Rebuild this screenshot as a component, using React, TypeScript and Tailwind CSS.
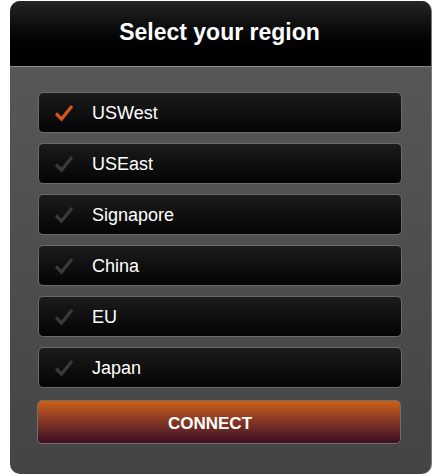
import React, { useState } from 'react';

const regions = ['USWest', 'USEast', 'Signapore', 'China', 'EU', 'Japan'];

const Check: React.FC<{ active: boolean }> = ({ active }) => (
  <svg width="22" height="20" viewBox="0 0 22 20" fill="none">
    <path
      d="M3 10.5 L8.5 16 L19 3"
      stroke={active ? '#d4581c' : '#3a3a3a'}
      strokeWidth="3.2"
      strokeLinecap="butt"
      strokeLinejoin="miter"
    />
  </svg>
);

const App: React.FC = () => {
  const [selected, setSelected] = useState('USWest');

  return (
    <div className="w-[433px] h-[476px] bg-white pt-[1px] pl-[10px] font-['Liberation_Sans',Arial,sans-serif]">
      <div className="w-[422px] h-[473px] rounded-[10px] overflow-hidden border-r border-[#7a7a7a] flex flex-col bg-gradient-to-b from-[#5a5a5a] to-[#444444]">
        {/* Header */}
        <div className="h-[66px] shrink-0 bg-gradient-to-b from-[#252525] to-[#000000] border-b border-[#8a8a8a] flex items-center justify-center">
          <h1 className="text-white text-[23px] font-bold -mt-[3px] -ml-[2px]">Select your region</h1>
        </div>

        {/* Region list */}
        <div className="flex flex-col pl-[28px] pr-[29px] pt-[25px]">
          <div className="flex flex-col gap-[10px]">
            {regions.map((r) => (
              <button
                key={r}
                onClick={() => setSelected(r)}
                className="h-[41px] w-full flex items-center rounded-[5px] border border-[#6a6a6a] bg-gradient-to-b from-[#1c1c1c] to-[#050505] text-left"
              >
                <span className="w-[53px] pl-[14px] flex items-center">
                  <Check active={selected === r} />
                </span>
                <span className="text-white text-[18px] mt-[2px]">{r}</span>
              </button>
            ))}
          </div>

          <button className="mt-[12px] -ml-[1px] h-[44px] w-full rounded-[5px] border border-[#6e6e6e] bg-gradient-to-b from-[#cc6010] to-[#3e0e20] text-white font-bold text-[17px] pr-[18px] pt-[3px]">
            CONNECT
          </button>
        </div>
      </div>
    </div>
  );
};

export default App;
